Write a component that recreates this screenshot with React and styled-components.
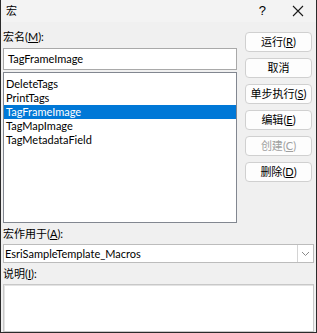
import React from "react";
import styled, { createGlobalStyle } from "styled-components";

const GlobalStyle = createGlobalStyle`
  html, body {
    margin: 0;
    padding: 0;
    background: #f0f0f0;
  }
  * {
    box-sizing: border-box;
  }
`;

const MACROS = [
  "DeleteTags",
  "PrintTags",
  "TagFrameImage",
  "TagMapImage",
  "TagMetadataField",
];

const BUTTONS = [
  { label: "运行", key: "R" },
  { label: "取消" },
  { label: "单步执行", key: "S" },
  { label: "编辑", key: "E" },
  { label: "创建", key: "C", disabled: true },
  { label: "删除", key: "D" },
];

const Key = ({ k }) => (
  <>
    (<u>{k}</u>)
  </>
);

const App = () => {
  return (
    <>
      <GlobalStyle />
      <Window>
        <TitleBar>
          <Title>宏</Title>
          <TitleActions>
            <HelpMark>?</HelpMark>
            <CloseIcon width="12" height="12" viewBox="0 0 12 12">
              <path d="M1 1 L11 11 M11 1 L1 11" stroke="#1a1a1a" strokeWidth="1.1" />
            </CloseIcon>
          </TitleActions>
        </TitleBar>
        <Body>
          <TopRow>
            <LeftColumn>
              <Label>
                宏名<Key k="M" />:
              </Label>
              <NameInput>TagFrameImage</NameInput>
              <ListBox>
                {MACROS.map((name) => (
                  <ListItem key={name} $selected={name === "TagFrameImage"}>
                    {name}
                  </ListItem>
                ))}
              </ListBox>
            </LeftColumn>
            <ButtonColumn>
              {BUTTONS.map((b) => (
                <Button key={b.label} $disabled={b.disabled}>
                  {b.label}
                  {b.key ? <Key k={b.key} /> : null}
                </Button>
              ))}
            </ButtonColumn>
          </TopRow>
          <LowerLabel>
            宏作用于<Key k="A" />:
          </LowerLabel>
          <Select>
            <SelectText>EsriSampleTemplate_Macros</SelectText>
            <SelectArrow>
              <svg width="9" height="6" viewBox="0 0 9 6">
                <path d="M1 1 L4.5 4.5 L8 1" stroke="#8a8a8a" strokeWidth="1" fill="none" />
              </svg>
            </SelectArrow>
          </Select>
          <LowerLabel>
            说明<Key k="I" />:
          </LowerLabel>
          <Description />
        </Body>
      </Window>
    </>
  );
};

export default App;

const Window = styled.div`
  width: 317px;
  height: 333px;
  display: flex;
  flex-direction: column;
  background: #f0f0f0;
  border: 1px solid #2b2b2b;
  border-top: none;
  font-family: "Lato", "Noto Sans CJK SC", sans-serif;
  font-size: 11px;
  color: #000;
  overflow: hidden;
`;

const TitleBar = styled.div`
  height: 23px;
  display: flex;
  align-items: center;
  justify-content: space-between;
  padding: 0 12px 0 5px;
  background: #f3f3f3;
`;

const Title = styled.span`
  font-size: 11px;
  line-height: 14px;
`;

const TitleActions = styled.div`
  display: flex;
  align-items: center;
  gap: 26px;
`;

const HelpMark = styled.span`
  font-family: "Liberation Sans", sans-serif;
  font-size: 13px;
  line-height: 14px;
`;

const CloseIcon = styled.svg`
  display: block;
`;

const Body = styled.div`
  flex: 1;
  display: flex;
  flex-direction: column;
  padding: 0 3px 0 2px;
`;

const TopRow = styled.div`
  display: flex;
  gap: 8px;
`;

const LeftColumn = styled.div`
  width: 234px;
  display: flex;
  flex-direction: column;
`;

const Label = styled.div`
  height: 26px;
  padding-top: 8px;
  line-height: 14px;
`;

const NameInput = styled.div`
  height: 22px;
  border: 1px solid #a9a9a9;
  background: #fff;
  padding: 0 4px;
  line-height: 20px;
  margin-bottom: 2px;
`;

const ListBox = styled.div`
  height: 151px;
  border: 1px solid #828790;
  background: #fff;
  padding-top: 4px;
`;

const ListItem = styled.div`
  height: 14px;
  line-height: 14px;
  padding-left: 2px;
  background: ${(p) => (p.$selected ? "#0078d7" : "transparent")};
  color: ${(p) => (p.$selected ? "#fff" : "#000")};
`;

const ButtonColumn = styled.div`
  width: 67px;
  padding-top: 10px;
  display: flex;
  flex-direction: column;
  gap: 6px;
`;

const Button = styled.div`
  height: 20px;
  border: 1px solid #d0d0d0;
  border-radius: 4px;
  background: #fdfdfd;
  display: flex;
  align-items: center;
  justify-content: center;
  line-height: 14px;
  color: ${(p) => (p.$disabled ? "#a0a0a0" : "#000")};
`;

const LowerLabel = styled.div`
  height: 21px;
  line-height: 14px;
  padding-top: 4px;
`;

const Select = styled.div`
  height: 19px;
  width: 311px;
  border: 1px solid #bcbcbc;
  background: #fff;
  display: flex;
`;

const SelectText = styled.div`
  flex: 1;
  padding-left: 1px;
  line-height: 17px;
`;

const SelectArrow = styled.div`
  width: 16px;
  border-left: 1px solid #d4d4d4;
  display: flex;
  align-items: center;
  justify-content: center;
`;

const Description = styled.div`
  width: 311px;
  height: 48px;
  border: 1px solid #c8c8c8;
  box-shadow: inset 1px 1px 0 #e3e3e3;
  background: #fff;
`;
